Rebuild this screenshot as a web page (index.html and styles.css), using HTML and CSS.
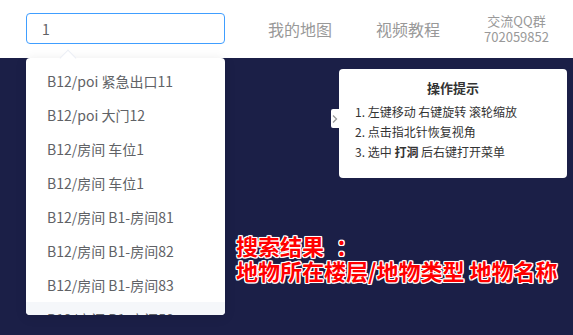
FILE: index.html
```html
<!DOCTYPE html>
<html lang="zh-CN">
<head>
    <meta charset="UTF-8">
    <title>地图搜索</title>
    <link rel="stylesheet" href="styles.css">
</head>
<body>
    <header class="topbar">
        <div class="search">
            <input class="search-input" type="text" value="1">
        </div>
        <nav class="nav">
            <a href="#" class="nav-link">我的地图</a>
            <a href="#" class="nav-link">视频教程</a>
            <div class="qq">
                <span>交流QQ群</span>
                <span>702059852</span>
            </div>
        </nav>
    </header>
    <main class="map">
        <div class="dropdown">
            <span class="dropdown-arrow"></span>
            <ul class="dropdown-list">
                <li>B12/poi 紧急出口11</li>
                <li>B12/poi 大门12</li>
                <li>B12/房间 车位1</li>
                <li>B12/房间 车位1</li>
                <li>B12/房间 B1-房间81</li>
                <li>B12/房间 B1-房间82</li>
                <li>B12/房间 B1-房间83</li>
                <li class="hover">B12/房间 B1-房间58</li>
            </ul>
        </div>

        <div class="tips">
            <span class="tips-toggle">
                <svg width="8" height="10" viewBox="0 0 8 10"><path d="M2 1.5 L5.5 5 L2 8.5" fill="none" stroke="#999" stroke-width="1.3"/></svg>
            </span>
            <h3 class="tips-title">操作提示</h3>
            <ol class="tips-list">
                <li>1. 左键移动 右键旋转 滚轮缩放</li>
                <li>2. 点击指北针恢复视角</li>
                <li>3. 选中 <b>打洞</b> 后右键打开菜单</li>
            </ol>
        </div>

        <div class="note">
            搜索结果<span class="colon">：</span><br>
            地物所在楼层/地物类型 地物名称
        </div>
    </main>
</body>
</html>
```

FILE: styles.css
```css
* {
    box-sizing: border-box;
}
body {
    margin: 0;
    padding: 0;
    font-family: "Microsoft YaHei", "Noto Sans CJK SC", sans-serif;
    background-color: #1b1f47;
    height: 335px;
    overflow: hidden;
}
.topbar {
    height: 58px;
    background-color: #fff;
    display: flex;
    align-items: flex-start;
    padding-left: 26px;
}
.search {
    margin-top: 13px;
}
.search-input {
    width: 199px;
    height: 31px;
    border: 1px solid #409eff;
    border-radius: 4px;
    padding: 0 15px;
    font-family: inherit;
    font-size: 14px;
    color: #606266;
    outline: none;
}
.nav {
    display: flex;
    align-items: center;
    height: 58px;
    margin-left: 43px;
}
.nav-link {
    font-size: 16px;
    color: #999;
    text-decoration: none;
    margin-right: 44px;
}
.qq {
    display: flex;
    flex-direction: column;
    font-size: 13px;
    line-height: 16px;
    color: #999;
    text-align: center;
    margin-top: -1px;
}
.map {
    position: relative;
    height: 277px;
}
.dropdown {
    position: absolute;
    left: 26px;
    top: 0;
    width: 199px;
    height: 257px;
    background-color: #fff;
    border-radius: 4px;
    box-shadow: 0 2px 12px rgba(0, 0, 0, 0.1);
}
.dropdown-arrow {
    position: absolute;
    left: 36px;
    top: -6px;
    width: 12px;
    height: 12px;
    background-color: #fff;
    border-top: 1px solid #ebeef5;
    border-left: 1px solid #ebeef5;
    transform: rotate(45deg);
}
.dropdown-list {
    list-style: none;
    margin: 0;
    padding: 6px 0 0;
    height: 100%;
    overflow: hidden;
    border-radius: 4px;
    position: relative;
}
.dropdown-list li {
    height: 34px;
    line-height: 34px;
    padding: 0 21px;
    font-size: 14px;
    color: #606266;
    white-space: nowrap;
}
.dropdown-list li.hover {
    background-color: #f5f7fa;
}
.tips {
    position: absolute;
    left: 339px;
    top: 11px;
    width: 228px;
    height: 109px;
    background-color: #fff;
    border-radius: 4px;
    padding: 10px 16px 0;
    color: #333;
}
.tips-toggle {
    position: absolute;
    left: -8px;
    top: 40px;
    width: 8px;
    height: 19px;
    background-color: #fff;
    border-radius: 2px 0 0 2px;
    display: flex;
    align-items: center;
    justify-content: center;
}
.tips-title {
    margin: 0 0 5px;
    font-size: 13px;
    font-weight: bold;
    line-height: 18px;
    text-align: center;
}
.tips-list {
    list-style: none;
    margin: 0;
    padding: 0;
    font-size: 12px;
    line-height: 20px;
}
.note {
    position: absolute;
    left: 236px;
    top: 175px;
    font-size: 22px;
    line-height: 25px;
    font-weight: bold;
    color: #ff0000;
    white-space: nowrap;
    text-shadow: 1px 0 0 #fff, -1px 0 0 #fff, 0 1px 0 #fff, 0 -1px 0 #fff,
        1px 1px 0 #fff, -1px -1px 0 #fff, 1px -1px 0 #fff, -1px 1px 0 #fff,
        0 0 2px #fff;
}
.colon {
    margin-left: 12px;
}
```
